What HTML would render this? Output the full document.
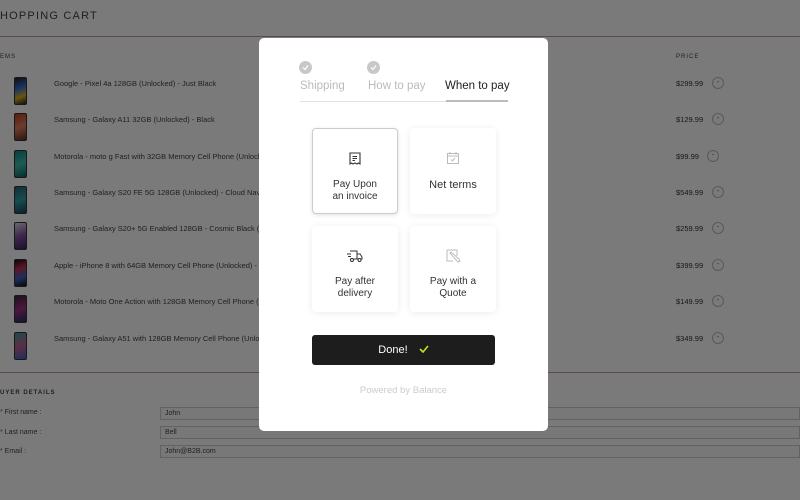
<!DOCTYPE html>
<html><head><meta charset="utf-8"><style>
*{margin:0;padding:0;box-sizing:border-box}
body{width:800px;height:500px;overflow:hidden;background:#fff;font-family:"Liberation Sans",sans-serif;position:relative}
.bg{position:absolute;inset:0;background:#fff}
.a{position:absolute;white-space:nowrap}
.t{font-size:7.5px;color:#444}
.ph{position:absolute;left:14px;width:13px;height:28px;border-radius:2px;border:1px solid #333}
.pr{font-size:7.5px;color:#333}
.mn{position:absolute;width:12px;height:12px;border:1px solid #bbb;border-radius:50%;font-size:7px;text-align:center;line-height:10px;color:#444}
.lbl{font-size:7px;color:#444}
.in{position:absolute;left:160px;width:640px;height:13px;border:1px solid #ccc;background:#fafafa;font-size:7px;color:#444;padding-left:4px;line-height:11px}
.ov{position:absolute;inset:0;background:rgba(0,0,0,0.52)}
.modal{position:absolute;left:259px;top:38px;width:289px;height:393px;background:#fff;border-radius:5px}
.card{position:absolute;width:86px;height:86px;background:#fff;border-radius:4px;box-shadow:0 1px 8px rgba(0,0,0,0.08);text-align:center;font-size:10px;color:#333;line-height:12px}
.card svg{display:block;margin:0 auto}
.chk{position:absolute;width:13px;height:13px;border-radius:50%;background:#c8c8c8}
.chk svg{position:absolute;left:3px;top:3px}
</style></head><body>
<div class="bg">
<div class="a" style="left:0;top:10px;font-size:11px;letter-spacing:1.2px;color:#444">HOPPING CART</div>
<div class="a" style="left:0;top:36px;width:800px;height:1px;background:#c8a090"></div>
<div class="a lbl" style="left:0;top:54px;font-size:6px;letter-spacing:1px">EMS</div>
<div class="a lbl" style="left:676px;top:54px;font-size:6px;letter-spacing:1px">PRICE</div>

<div class="ph" style="top:77px;background:linear-gradient(160deg,#222,#3a6fd0 40%,#e0b020 70%,#222)"></div>
<div class="a t" style="left:54px;top:79px">Google - Pixel 4a 128GB (Unlocked) - Just Black</div>
<div class="a pr" style="left:676px;top:79px">$299.99</div><div class="mn" style="left:712px;top:77px">-</div>

<div class="ph" style="top:113px;background:linear-gradient(160deg,#c04020,#e08060,#603020)"></div>
<div class="a t" style="left:54px;top:115px">Samsung - Galaxy A11 32GB (Unlocked) - Black</div>
<div class="a pr" style="left:676px;top:115px">$129.99</div><div class="mn" style="left:712px;top:113px">-</div>

<div class="ph" style="top:150px;background:linear-gradient(160deg,#1a8080,#40c0b0,#106060)"></div>
<div class="a t" style="left:54px;top:152px">Motorola - moto g Fast with 32GB Memory Cell Phone (Unlocked)</div>
<div class="a pr" style="left:676px;top:152px">$99.99</div><div class="mn" style="left:707px;top:150px">-</div>

<div class="ph" style="top:186px;background:linear-gradient(160deg,#2a6080,#30a0a0,#1a4060)"></div>
<div class="a t" style="left:54px;top:188px">Samsung - Galaxy S20 FE 5G 128GB (Unlocked) - Cloud Navy</div>
<div class="a pr" style="left:676px;top:188px">$549.99</div><div class="mn" style="left:712px;top:186px">-</div>

<div class="ph" style="top:222px;background:linear-gradient(160deg,#ddd,#8050a0,#402060)"></div>
<div class="a t" style="left:54px;top:224px">Samsung - Galaxy S20+ 5G Enabled 128GB - Cosmic Black (Verizon)</div>
<div class="a pr" style="left:676px;top:224px">$259.99</div><div class="mn" style="left:712px;top:222px">-</div>

<div class="ph" style="top:259px;background:linear-gradient(160deg,#111,#c03050,#4060c0,#111)"></div>
<div class="a t" style="left:54px;top:261px">Apple - iPhone 8 with 64GB Memory Cell Phone (Unlocked) - Red</div>
<div class="a pr" style="left:676px;top:261px">$399.99</div><div class="mn" style="left:712px;top:259px">-</div>

<div class="ph" style="top:295px;background:linear-gradient(160deg,#402040,#a03080,#203060)"></div>
<div class="a t" style="left:54px;top:297px">Motorola - Moto One Action with 128GB Memory Cell Phone (Unlocked)</div>
<div class="a pr" style="left:676px;top:297px">$149.99</div><div class="mn" style="left:712px;top:295px">-</div>

<div class="ph" style="top:332px;background:linear-gradient(160deg,#40a0a0,#c06090,#4060c0)"></div>
<div class="a t" style="left:54px;top:334px">Samsung - Galaxy A51 with 128GB Memory Cell Phone (Unlocked)</div>
<div class="a pr" style="left:676px;top:334px">$349.99</div><div class="mn" style="left:712px;top:332px">-</div>

<div class="a" style="left:0;top:372px;width:800px;height:1px;background:#c8a090"></div>
<div class="a lbl" style="left:0;top:390px;font-size:6px;letter-spacing:1px;font-weight:bold">UYER DETAILS</div>
<div class="a lbl" style="left:0;top:409px"><span style="color:#c04020">*</span> First name :</div>
<div class="a lbl" style="left:0;top:429px"><span style="color:#c04020">*</span> Last name :</div>
<div class="a lbl" style="left:0;top:448px"><span style="color:#c04020">*</span> Email :</div>
<div class="in" style="top:407px">John</div>
<div class="in" style="top:426px">Bell</div>
<div class="in" style="top:445px">John@B2B.com</div>
</div>
<div class="ov"></div>

<div class="modal">
<div class="chk" style="left:40px;top:23px"><svg width="7" height="7" viewBox="0 0 7 7"><path d="M1 3.5L3 5.5L6 1.5" stroke="#fff" stroke-width="1.2" fill="none"/></svg></div>
<div class="chk" style="left:108px;top:23px"><svg width="7" height="7" viewBox="0 0 7 7"><path d="M1 3.5L3 5.5L6 1.5" stroke="#fff" stroke-width="1.2" fill="none"/></svg></div>
<div class="a" style="left:41px;top:42px;font-size:11.5px;color:#bbb">Shipping</div>
<div class="a" style="left:109px;top:42px;font-size:11.5px;color:#bbb">How to pay</div>
<div class="a" style="left:186px;top:42px;font-size:11.5px;color:#222">When to pay</div>
<div class="a" style="left:41px;top:63px;width:208px;height:1px;background:#e2e2e2"></div>
<div class="a" style="left:187px;top:62px;width:62px;height:2px;background:#bbb"></div>

<div class="card" style="left:53px;top:90px;border:1px solid #ccc;box-shadow:0 1px 4px rgba(0,0,0,0.12)">
<svg width="14" height="14" viewBox="0 0 14 14" style="margin-top:23px"><path d="M2 1H12V12L10.5 11L9 12L7 11L5 12L3.5 11L2 12Z" fill="none" stroke="#333" stroke-width="1.1"/><path d="M4.5 4.5H9M4.5 6.5H9M4.5 8.5H7" stroke="#333" stroke-width="1"/></svg>
<div style="margin-top:13px">Pay Upon<br>an invoice</div></div>

<div class="card" style="left:151px;top:90px">
<svg width="14" height="14" viewBox="0 0 14 14" style="margin-top:23px"><rect x="1.5" y="2.5" width="11" height="10" fill="none" stroke="#bbb"/><path d="M1.5 5H12.5M4 1V3.5M10 1V3.5M5 8.5L6.5 10L9 7" stroke="#bbb" fill="none"/></svg>
<div style="margin-top:14px;font-size:11px">Net terms</div></div>

<div class="card" style="left:53px;top:188px">
<svg width="18" height="14" viewBox="0 0 18 14" style="margin-top:23px"><path d="M4 2H11V10H4M11 5H14L16 8V10H11M1 5H5M2 7.5H5" fill="none" stroke="#333" stroke-width="1"/><circle cx="6" cy="11" r="1.5" fill="#fff" stroke="#333"/><circle cx="13.5" cy="11" r="1.5" fill="#fff" stroke="#333"/></svg>
<div style="margin-top:13px">Pay after<br>delivery</div></div>

<div class="card" style="left:151px;top:188px">
<svg width="16" height="16" viewBox="0 0 16 16" style="margin-top:22px"><path d="M2 2H12V8M2 2V13H8" fill="none" stroke="#bbb"/><path d="M5 5L13 14L15 13L14 11L6 4Z" fill="none" stroke="#bbb"/></svg>
<div style="margin-top:12px">Pay with a<br>Quote</div></div>

<div class="a" style="left:53px;top:297px;width:183px;height:30px;background:#1d1d1d;border-radius:3px;color:#fff;font-size:11px;text-align:center;line-height:30px">Done! <svg width="10" height="8" viewBox="0 0 10 8" style="margin-left:8px"><path d="M1 4L4 7L9 1" stroke="#c8e020" stroke-width="1.6" fill="none"/></svg></div>
<div class="a" style="left:0;width:289px;top:347px;text-align:center;font-size:9.5px;color:#ccc">Powered by Balance</div>
</div>
</body></html>
